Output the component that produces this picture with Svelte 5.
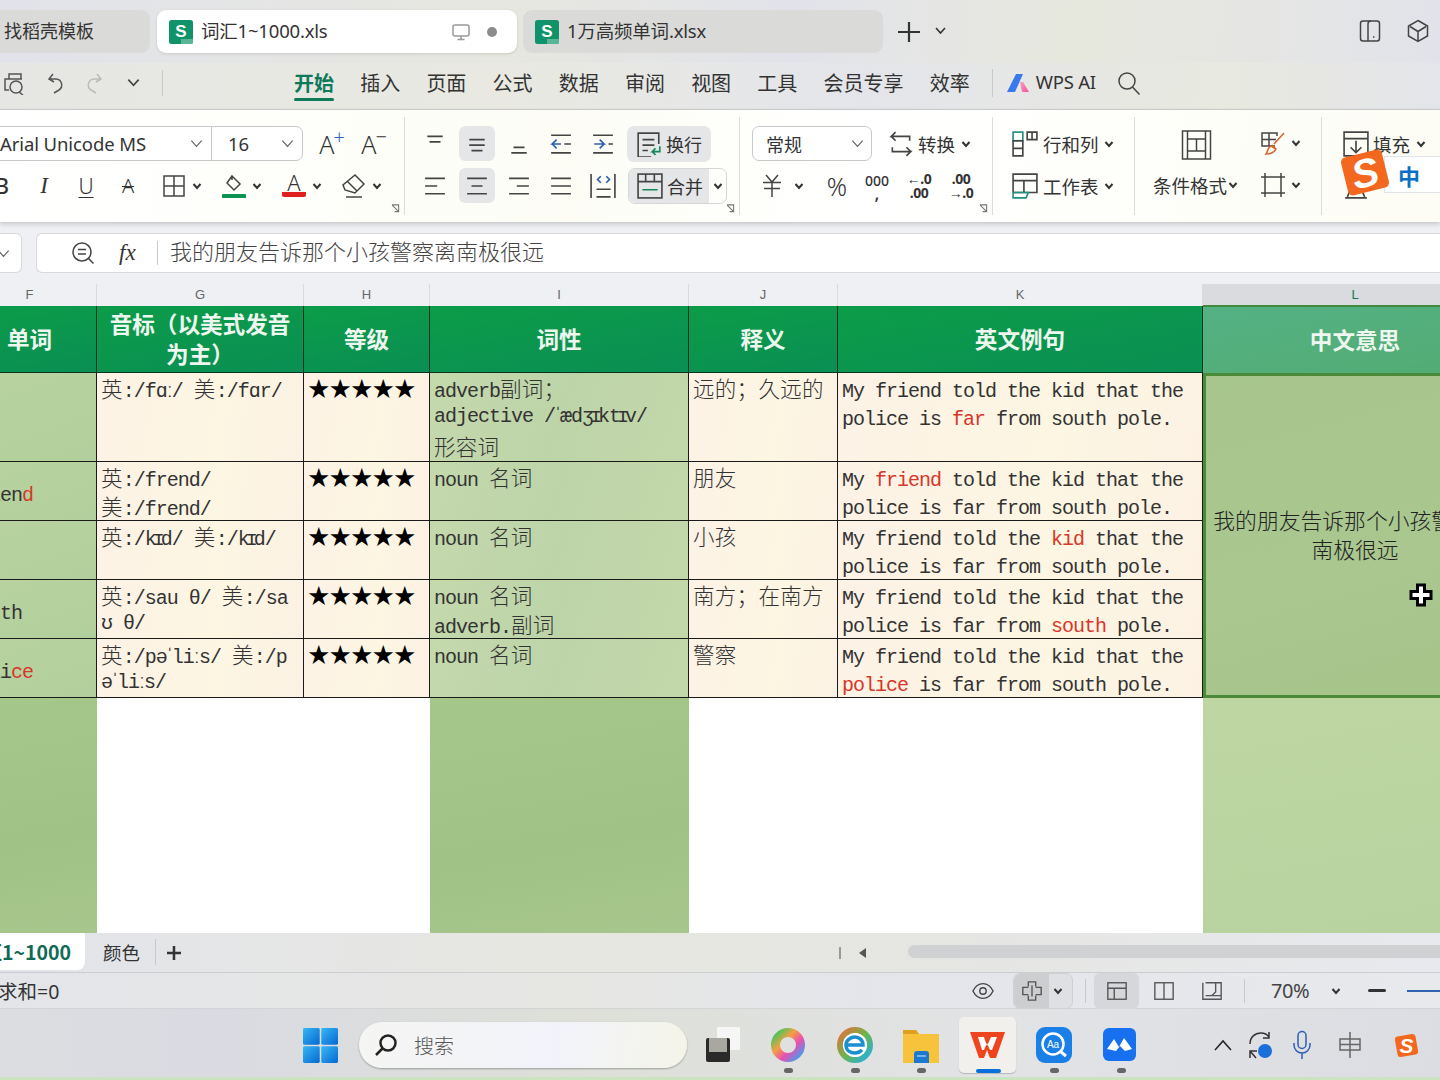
<script>
	const menus = ['开始', '插入', '页面', '公式', '数据', '审阅', '视图', '工具', '会员专享', '效率'];
	const sentence = (word) =>
		`My friend told the kid that the police is far from south pole.`.replace(word, `*${word}*`);

	const rows = [
		{
			word: ['', 'far'],
			ipa: ['英:/fɑː/ 美:/fɑr/'],
			pos: ['adverb副词；', 'adjective /ˈædʒɪktɪv/', '形容词'],
			mean: '远的；久远的',
			ex: sentence('far')
		},
		{
			word: ['frien', 'd'],
			ipa: ['英:/frend/', '美:/frend/'],
			pos: ['noun 名词'],
			mean: '朋友',
			ex: sentence('friend')
		},
		{
			word: ['', 'kid'],
			ipa: ['英:/kɪd/ 美:/kɪd/'],
			pos: ['noun 名词'],
			mean: '小孩',
			ex: sentence('kid')
		},
		{
			word: ['south', ''],
			ipa: ['英:/sau θ/ 美:/sa', 'ʊ θ/'],
			pos: ['noun 名词', 'adverb.副词'],
			mean: '南方；在南方',
			ex: sentence('south')
		},
		{
			word: ['poli', 'ce'],
			ipa: ['英:/pəˈliːs/ 美:/p', 'əˈliːs/'],
			pos: ['noun 名词'],
			mean: '警察',
			ex: sentence('police')
		}
	];

	function runs(text) {
		return text
			.split(/([\u4e00-\u9fff：；（）]+|[ɪˈː])/)
			.filter(Boolean)
			.map((t) => ({
				t,
				cjk: /[\u4e00-\u9fff：；（）]/.test(t),
				narrow: /[ɪˈː]/.test(t)
			}));
	}

	function exParts(text) {
		return text.split('*').map((t, i) => ({ t, red: i % 2 === 1 }));
	}
</script>

{#snippet caret()}
	<svg class="caret" viewBox="0 0 10 10"><path d="M1.500 3 5 7l3.500-4" /></svg>
{/snippet}

{#snippet chev()}
	<svg class="chev" viewBox="0 0 16 16"><path d="M2.500 5 8 11l5.500-6" /></svg>
{/snippet}

{#snippet launcher()}
	<svg class="launcher" viewBox="0 0 10 10"><path d="M1 1h7.500v7.500M1.500 1.500l6.500 6.500M8.500 4v4.500H4" /></svg>
{/snippet}

{#snippet sheetIcon()}
	<svg class="file" viewBox="0 0 24 24">
		<rect width="24" height="24" rx="2.500" fill="#10936a" />
		<path d="M12 19h12v3a2 2 0 0 1-2 2H12z" fill="#59b595" />
		<text x="12" y="17" text-anchor="middle" class="file-s">S</text>
	</svg>
{/snippet}

{#snippet cellLines(lines)}
	{#each lines as line}
		<div class="line">{#each runs(line) as p}<span class:cjk={p.cjk} class:narrow={p.narrow}>{p.t}</span>{/each}</div>
	{/each}
{/snippet}

<div class="screen">
	<header class="tabbar">
		<div class="tab dim first">找稻壳模板</div>
		<div class="tab active">
			{@render sheetIcon()}
			<span class="tab-name">词汇1~1000.xls</span>
			<svg class="ico monitor" viewBox="0 0 20 20"><rect x="2" y="3" width="16" height="11" rx="2" /><path d="M10 14v3M6.500 17.500h7" /></svg>
			<i class="dot"></i>
		</div>
		<div class="tab dim">
			{@render sheetIcon()}
			<span class="tab-name">1万高频单词.xlsx</span>
		</div>
		<svg class="plus" viewBox="0 0 24 24"><path d="M12 2v20M1 12h22" /></svg>
		<span class="tab-caret">{@render chev()}</span>
		<div class="spring"></div>
		<svg class="ico win-ico" viewBox="0 0 24 24"><rect x="2.500" y="2" width="19" height="20" rx="2.500" /><path d="M10 22V5c0-2 1-3 3-3M15 18h1.500" /></svg>
		<svg class="ico win-ico cube" viewBox="0 0 24 24"><path d="M12 1.500 21.500 7v10L12 22.500 2.500 17V7zM4 7.500l8 5 8-5M12 12.500V22" /></svg>
	</header>

	<nav class="menubar">
		<svg class="ico qa print" viewBox="0 0 24 24"><path d="M5 8V3h12v5M5 19H1V8h17M15 21l4 3" /><circle cx="12" cy="16" r="6" /></svg>
		<svg class="ico qa" viewBox="0 0 24 24"><path d="M9 3 5 8l5 3M5 8h7a6 6 0 0 1 3 11l-5 3" /></svg>
		<svg class="ico qa off" viewBox="0 0 24 24"><path d="M15 3l4 5-5 3M19 8h-7a6 6 0 0 0-3 11l5 3" /></svg>
		<span class="qa-caret">{@render chev()}</span>
		<i class="vsep menu-sep"></i>
		<div class="menus">
			{#each menus as m, i}
				<span class="menu" class:current={i === 0}>{m}</span>
			{/each}
		</div>
		<i class="vsep ai-sep"></i>
		<svg class="ai-logo" viewBox="0 0 24 18">
			<defs>
				<linearGradient id="aiPink" x1="0" y1="0" x2="1" y2="1"><stop offset="0" stop-color="#f8a0c0" /><stop offset="1" stop-color="#f5509c" /></linearGradient>
			</defs>
			<path d="M9 0h7L8 18H0z" fill="#3a78ee" />
			<path d="M13 8h3l6 10h-7z" fill="url(#aiPink)" />
		</svg>
		<span class="ai-name">WPS AI</span>
		<svg class="ico find" viewBox="0 0 24 24"><circle cx="10" cy="10" r="8" /><path d="m15.500 16 7 7.500" /></svg>
	</nav>

	<section class="ribbon">
		<div class="group g1">
			<div class="row">
				<div class="select font-select">
					<span class="font-name">Arial Unicode MS</span>{@render chev()}
					<span class="font-size">16</span>{@render chev()}
				</div>
				<span class="btn a-size a-up">A<sup class="blue">+</sup></span>
				<span class="btn a-size">A<sup>−</sup></span>
			</div>
			<div class="row">
				<span class="btn glyph bold">B</span>
				<span class="btn glyph ital">I</span>
				<span class="btn glyph under">U</span>
				<span class="btn glyph strike">A</span>
				<span class="drop borders">
					<svg class="ico" viewBox="0 0 24 24"><rect x="2" y="2" width="20" height="20" /><path d="M12 2v20M2 12h20" /></svg>
					{@render caret()}
				</span>
				<span class="drop">
					<svg class="ico" viewBox="0 0 24 24"><path d="m10 2 8 8-6 6-7-7zM10 2v4" /><rect x="0" y="20" width="24" height="5" rx="1" fill="#0f9350" stroke="none" /></svg>
					{@render caret()}
				</span>
				<span class="drop">
					<span class="color-a">A</span>
					{@render caret()}
				</span>
				<span class="drop">
					<svg class="ico" viewBox="0 0 24 24"><path d="M13 1l9 9-9 9-10-3-2-5zM5 7l10 10M4 23h16" /></svg>
					{@render caret()}
				</span>
			</div>
			{@render launcher()}
		</div>

		<div class="group g2">
			<div class="row">
				<span class="btn"><svg class="ico s" viewBox="0 0 20 20"><path d="M3 3h14M5 8h10" /></svg></span>
				<span class="btn on"><svg class="ico s" viewBox="0 0 20 20"><path d="M3 6h14M3 11h14M5 16h10" /></svg></span>
				<span class="btn"><svg class="ico s" viewBox="0 0 20 20"><path d="M5 13h10M3 18h14" /></svg></span>
				<span class="btn"><svg class="ico s" viewBox="0 0 20 20"><path d="M1 2h18M1 18h18M13 10h6" /><path class="bl" d="M10 10H2l4-4M2 10l4 4" /></svg></span>
				<span class="btn"><svg class="ico s" viewBox="0 0 20 20"><path d="M1 2h18M1 18h18M15 10h4" /><path class="bl" d="M2 10h9l-4-4M11 10l-4 4" /></svg></span>
				<span class="pill wrap">
					<svg class="ico m" viewBox="0 0 24 24"><path d="M21 12V2H2v22h12M6 8h11M6 13h11M6 18h5" /><path class="gr" d="M22 14v5h-7l3-3M15 19l3 3" /></svg>
					换行
				</span>
			</div>
			<div class="row">
				<span class="btn"><svg class="ico s" viewBox="0 0 20 20"><path d="M1 3h18M1 10h11M1 17h18" /></svg></span>
				<span class="btn on"><svg class="ico s" viewBox="0 0 20 20"><path d="M1 3h18M5 10h10M1 17h18" /></svg></span>
				<span class="btn"><svg class="ico s" viewBox="0 0 20 20"><path d="M1 3h18M8 10h11M1 17h18" /></svg></span>
				<span class="btn"><svg class="ico s" viewBox="0 0 20 20"><path d="M1 3h18M1 10h18M1 17h18" /></svg></span>
				<span class="btn"><svg class="ico m" viewBox="0 0 24 24"><path d="M1 1v22M23 1v22M6 22h13M6 15h13" /><path class="bl" d="M10 3 7 6l3 3M15 3l3 3-3 3" /></svg></span>
				<span class="split merge">
					<span class="split-main">
						<svg class="ico m" viewBox="0 0 24 24"><rect x="1" y="1" width="22" height="22" /><path d="M1 8h22M8 1v7M16 1v7" /><path class="gr" d="M5 15.500h14" /></svg>
						合并
					</span>
					<span class="split-side">{@render caret()}</span>
				</span>
			</div>
			{@render launcher()}
		</div>

		<div class="group g3">
			<div class="row">
				<div class="select num-select"><span>常规</span>{@render chev()}</div>
				<svg class="ico m conv" viewBox="0 0 24 24"><path d="M7 1 3 5h17v4M17 23l4-4H4v-4M7 1 3 5l4 4M17 15l4 4-4 4" /></svg>
				<span class="lbl">转换</span>
				{@render caret()}
			</div>
			<div class="row">
				<svg class="ico money" viewBox="0 0 20 24" aria-label="¥"><path d="M4 1l6 7 6-7M1 8.500h18M2 14.500h16M10 8.500V23" /></svg>{@render caret()}
				<span class="pct">%</span>
				<span class="n3"><b>000</b><b class="comma">,</b></span>
				<span class="n3 dec"><b>←.0</b><b>.00</b></span>
				<span class="n3 dec"><b>.00</b><b>→.0</b></span>
			</div>
			{@render launcher()}
		</div>

		<div class="group g4">
			<div class="row">
				<svg class="ico m" viewBox="0 0 24 24"><rect x="1" y="1" width="9" height="8" class="te" /><path d="M1 9h9v14H1zM1 16h9M14 1h9v7h-9zM18.500 1v7" /></svg>
				<span class="lbl">行和列</span>{@render caret()}
			</div>
			<div class="row">
				<svg class="ico m" viewBox="0 0 24 24"><path d="M1 18V1h22v17H1M1 7h22M11 7v11" /><path class="te" d="M1 18v5h12l2-5z" /></svg>
				<span class="lbl">工作表</span>{@render caret()}
			</div>
		</div>

		<div class="group g5">
			<div class="cond">
				<svg class="ico big" viewBox="0 0 30 30"><path d="M6 1H1v28h5M24 1h5v28h-5M6 1h18v28H6zM6 9h18M6 21h18M15 9v12" /></svg>
				<span class="lbl cond-lbl">条件格式{@render caret()}</span>
			</div>
			<div class="cond-side">
				<span class="drop">
					<svg class="ico" viewBox="0 0 24 24"><path d="M14 15H1V2h15v3M1 8.500h14M8 2v13" /><path class="or" d="M23 2 13 13M10 15c-3 1-3 5-5 8 4 0 8-1 10-5zM11 14l4 4" /></svg>
					{@render caret()}
				</span>
				<span class="drop">
					<svg class="ico" viewBox="0 0 24 24"><path d="M0 4h24M0 20h24M4 0v24M20 0v24" /></svg>
					{@render caret()}
				</span>
			</div>
		</div>

		<div class="group g6">
			<div class="row">
				<svg class="ico m" viewBox="0 0 24 24"><path d="M1 1h22v22H1zM1 7h22M12 9v11M7 15l5 5 5-5" /></svg>
				<span class="lbl">填充</span>{@render caret()}
			</div>
			<div class="row">
				<svg class="ico m" viewBox="0 0 24 24"><path d="M4 22 12 4l8 18M2 23h20" /></svg>
			</div>
		</div>

		<div class="sogou">
			<div class="sogou-bar"><span>中</span></div>
			<div class="sogou-s"><span>S</span></div>
		</div>
	</section>

	<div class="formula">
		<div class="name-box">{@render chev()}</div>
		<div class="formula-box">
			<svg class="ico fz" viewBox="0 0 24 24"><circle cx="11" cy="11" r="9" /><path d="m17.500 17.500 5 5M7 8.500h8M7 13h8" /></svg>
			<span class="fx">fx</span>
			<i class="vsep fx-sep"></i>
			<span class="formula-text">我的朋友告诉那个小孩警察离南极很远</span>
		</div>
	</div>

	<div class="col-heads">
		<span class="ch">F</span>
		<span class="ch">G</span>
		<span class="ch">H</span>
		<span class="ch">I</span>
		<span class="ch">J</span>
		<span class="ch">K</span>
		<span class="ch sel">L</span>
	</div>

	<main class="sheet">
		<div class="hd">单词</div>
		<div class="hd">音标（以美式发音<br />为主）</div>
		<div class="hd">等级</div>
		<div class="hd">词性</div>
		<div class="hd">释义</div>
		<div class="hd">英文例句</div>
		<div class="hd hd-l">中文意思</div>

		{#each rows as r, i}
			<div class="c green word">{r.word[0]}<span class="red">{r.word[1]}</span></div>
			<div class="c cream">{@render cellLines(r.ipa)}</div>
			<div class="c cream stars">★★★★★</div>
			<div class="c green2">{@render cellLines(r.pos)}</div>
			<div class="c cream cjk mean">{r.mean}</div>
			<div class="c cream ex">
				{#each exParts(r.ex) as p}<span class:red={p.red}>{p.t}</span>{/each}
			</div>
			{#if i === 0}
				<div class="merged"><span>我的朋友告诉那个小孩警察离南极很远</span></div>
			{/if}
		{/each}

		<div class="blank b-f"></div>
		<div class="blank"></div>
		<div class="blank"></div>
		<div class="blank b-i"></div>
		<div class="blank"></div>
		<div class="blank"></div>
		<div class="blank b-l"></div>
	</main>

	<div class="sheet-tabs">
		<div class="sheet-tab">词汇1~1000</div>
		<span class="sheet-other">颜色</span>
		<i class="vsep tabs-sep"></i>
		<svg class="add" viewBox="0 0 14 14"><path d="M7 0v14M0 7h14" /></svg>
		<div class="spring"></div>
		<i class="tick"></i>
		<i class="left-tri"></i>
		<div class="hscroll"></div>
	</div>

	<div class="status">
		<span class="sum">求和=0</span>
		<div class="spring"></div>
		<svg class="ico eye" viewBox="0 0 24 24"><path d="M1 12C4 6 8 4 12 4s8 2 11 8c-3 6-7 8-11 8s-8-2-11-8z" /><circle cx="12" cy="12" r="3.500" /></svg>
		<span class="split view-split">
			<span class="view-main"><svg class="ico s2" viewBox="0 0 24 24"><path d="M8 7V2h8v5M8 17v5h8v-5M8 8H2v8h6M16 8h6v8h-6M12 6v12" /></svg></span>
			<span class="view-side">{@render caret()}</span>
		</span>
		<i class="vsep st-sep"></i>
		<span class="view on"><svg class="ico s2" viewBox="0 0 24 24"><rect x="2" y="3" width="20" height="18" /><path d="M2 9h20M9 9v12" /></svg></span>
		<span class="view"><svg class="ico s2" viewBox="0 0 24 24"><rect x="2" y="3" width="20" height="18" /><path d="M12 3v18" /></svg></span>
		<span class="view"><svg class="ico s2" viewBox="0 0 24 24"><path d="M5 3h17v14H5M2 3v18h20v-4M16 3v10l-4 4" /></svg></span>
		<i class="vsep st-sep2"></i>
		<span class="zoom-val">70%</span>
		<span class="zoom-caret">{@render caret()}</span>
		<i class="minus"></i>
		<i class="slider"></i>
	</div>

	<footer class="taskbar">
		<svg class="start" viewBox="0 0 36 36">
			<defs>
				<linearGradient id="winB" x1="0" y1="0" x2="1" y2="1"><stop offset="0" stop-color="#39b6f5" /><stop offset="1" stop-color="#0369d1" /></linearGradient>
			</defs>
			<rect x="0" y="0" width="17.200" height="17.200" rx="1.500" fill="url(#winB)" />
			<rect x="18.800" y="0" width="17.200" height="17.200" rx="1.500" fill="url(#winB)" />
			<rect x="0" y="18.800" width="17.200" height="17.200" rx="1.500" fill="url(#winB)" />
			<rect x="18.800" y="18.800" width="17.200" height="17.200" rx="1.500" fill="url(#winB)" />
		</svg>
		<div class="search">
			<svg class="ico sr" viewBox="0 0 24 24"><circle cx="14" cy="10" r="7.500" /><path d="M8.500 15.500 2 22" /></svg>
			<span>搜索</span>
		</div>
		<div class="apps">
			<span class="app">
				<svg viewBox="0 0 36 36" class="ai"><rect x="13" y="0" width="23" height="23" fill="#f6f6f6" /><rect x="2" y="11" width="24" height="24" rx="2" fill="#2a2a2a" /><rect x="5" y="11" width="18" height="14" fill="#a8a8a0" /></svg>
			</span>
			<span class="app dotted">
				<svg viewBox="0 0 36 36" class="ai"><defs><linearGradient id="ring" x1="0" y1="0" x2="1" y2="1"><stop offset="0" stop-color="#38c860" /><stop offset=".35" stop-color="#f5a040" /><stop offset=".65" stop-color="#e850b0" /><stop offset="1" stop-color="#40a0f0" /></linearGradient></defs><circle cx="18" cy="18" r="12.500" fill="none" stroke="url(#ring)" stroke-width="9" /></svg>
			</span>
			<span class="app dotted">
				<svg viewBox="0 0 36 36" class="ai"><defs><linearGradient id="edge" x1="0" y1="0" x2="1" y2="1"><stop offset="0" stop-color="#e8703a" /><stop offset=".5" stop-color="#6cb54a" /><stop offset="1" stop-color="#20b0e8" /></linearGradient></defs><circle cx="18" cy="18" r="15" fill="none" stroke="url(#edge)" stroke-width="6" /><circle cx="18" cy="18" r="12" fill="#fff" /><path d="M9 18h17c0-5-4-8-8-8s-9 3-9 8 4 8 9 8c3 0 5-1 7-3" fill="none" stroke="#1c8fd0" stroke-width="3.500" /></svg>
			</span>
			<span class="app dotted">
				<svg viewBox="0 0 36 36" class="ai"><path d="M0 3h13l3 4h20v29H0z" fill="#f8c33c" /><path d="M0 3h13l3 4H0z" fill="#dfa020" /><path d="M11 36V27a3 3 0 0 1 3-3h9a3 3 0 0 1 3 3v9z" fill="#1f78d0" /><path d="M14 29h9" stroke="#8fc8f5" stroke-width="1.500" /></svg>
			</span>
			<span class="app wps">
				<svg viewBox="0 0 36 36" class="ai"><path d="M0 5h35l-9 26h-6l-3-8-3 8H9z" fill="#f0441f" /><path d="M8 10h6l3 9 4-9h6l-5 13h-2l-3-7-3 7h-2z" fill="#fff" /></svg>
			</span>
			<span class="app dotted">
				<svg viewBox="0 0 36 36" class="ai"><rect width="36" height="36" rx="9" fill="#1a80e8" /><circle cx="17" cy="17" r="10.500" fill="none" stroke="#fff" stroke-width="2.500" /><path d="m25 25 5 4" stroke="#fff" stroke-width="3" /><text x="17" y="21" text-anchor="middle" class="aa">Aa</text></svg>
			</span>
			<span class="app dotted">
				<svg viewBox="0 0 36 36" class="ai"><rect y="1" width="33" height="33" rx="6" fill="#1670f0" /><path d="M4 22 11 12l5 8 5-9 8 11-7 2-5-5-4 5z" fill="#fff" /></svg>
			</span>
		</div>
		<div class="tray">
			<svg class="ico t-up" viewBox="0 0 20 14"><path d="M2 12 10 3l8 9" /></svg>
			<svg class="ico t-sync" viewBox="0 0 26 30"><path d="M3 14C3 7 8 3 14 3c3 0 6 1 8 4M22 2v6h-6M3 28v-7h7M3 21l6 7" /><circle cx="18" cy="21" r="7" fill="#1a70d8" stroke="none" /></svg>
			<svg class="ico t-mic" viewBox="0 0 20 30"><rect x="6" y="1.500" width="8" height="17" rx="4" /><path d="M2 13v2a8 8 0 0 0 16 0v-2M10 23v6" /></svg>
			<svg class="ico t-ime" viewBox="0 0 24 30"><rect x="2" y="9" width="20" height="11" /><path d="M12 2v26M2 14.500h20" /></svg>
			<svg class="t-s" viewBox="0 0 24 24"><rect x="2" y="2" width="20" height="20" rx="3" fill="#f4671f" transform="rotate(-10 12 12)" /><text x="12" y="19" text-anchor="middle" class="s-txt">S</text></svg>
		</div>
	</footer>

	<svg class="cursor" viewBox="0 0 24 24"><path d="M8.500 2h7v6.500H22v7h-6.500V22h-7v-6.500H2v-7h6.500z" fill="#fff" stroke="#000" stroke-width="3" /></svg>
</div>

<style>
	:global(body) {
		margin: 0;
		overflow: hidden;
		background: #e4e5e8;
	}

	.screen {
		position: relative;
		display: flex;
		flex-direction: column;
		width: 1440px;
		height: 1080px;
		overflow: hidden;
		font-family: 'Noto Sans CJK SC', 'Noto Sans', sans-serif;
		color: #333;
	}

	svg {
		flex: none;
		display: block;
	}

	.spring {
		flex: 1;
	}

	.ico {
		width: 24px;
		height: 24px;
		fill: none;
		stroke: #444;
		stroke-width: 1.500;
	}

	.ico.s {
		width: 22px;
		height: 22px;
	}

	.ico.m {
		width: 26px;
		height: 26px;
	}

	.bl {
		stroke: #2c5fb0;
	}

	.gr {
		stroke: #17875a;
	}

	.te {
		stroke: #1f8f80;
	}

	.or {
		stroke: #d9622a;
	}

	.caret {
		width: 10px;
		height: 10px;
		fill: none;
		stroke: #333;
		stroke-width: 2;
	}

	.chev {
		width: 15px;
		height: 15px;
		fill: none;
		stroke: #666;
		stroke-width: 1.300;
	}

	.vsep {
		display: block;
		width: 1px;
		background: #c8c9cc;
		flex: none;
	}

	/* title tabs */
	.tabbar {
		flex: none;
		height: 63px;
		box-sizing: border-box;
		padding-top: 10px;
		display: flex;
		align-items: flex-start;
		background: linear-gradient(95deg, #e2e3ea 0%, #e6e7df 35%, #e2e3ea 55%, #e7e8dd 75%, #e2e3ea 100%);
	}

	.tab {
		box-sizing: border-box;
		width: 360px;
		height: 43px;
		margin-right: 6px;
		padding: 0 0 3px 12px;
		display: flex;
		align-items: center;
		border-radius: 9px;
		font-size: 18px;
		color: #333;
	}

	.tab.dim {
		background: #dadbd9;
	}

	.tab.first {
		width: 160px;
		margin-left: -10px;
		padding-left: 14px;
		margin-right: 7px;
	}

	.tab.active {
		background: #fff;
		box-shadow: 0 1px 3px rgba(0, 0, 0, 0.12);
	}

	.file {
		width: 24px;
		height: 24px;
		margin: 3px 8px 0 0;
	}

	.file-s {
		font: 700 17px 'Liberation Sans', sans-serif;
		fill: #fff;
	}

	.tab-name {
		flex: 1;
		font-family: 'Noto Sans', 'Noto Sans CJK SC', sans-serif;
		font-size: 18.500px;
		letter-spacing: -0.200px;
	}

	.monitor {
		width: 20px;
		height: 20px;
		stroke: #999;
		margin: 3px 16px 0 0;
	}

	.dot {
		width: 10px;
		height: 10px;
		margin: 3px 20px 0 0;
		border-radius: 50%;
		background: #8c8c8c;
	}

	.plus {
		width: 24px;
		height: 24px;
		margin: 10px 0 0 8px;
		stroke: #333;
		stroke-width: 2.200;
		fill: none;
	}

	.tab-caret {
		margin: 14px 0 0 13px;
	}

	.tab-caret .chev {
		stroke: #333;
		stroke-width: 2;
		width: 13px;
		height: 13px;
	}

	.win-ico {
		margin: 9px 0 0 0;
		stroke: #444;
	}

	.cube {
		margin: 9px 10px 0 24px;
	}

	/* menu row */
	.menubar {
		flex: none;
		height: 47px;
		padding-bottom: 7px;
		display: flex;
		align-items: center;
		background: linear-gradient(95deg, #e6e7e4 0%, #e9e9e2 35%, #e4e5ea 60%, #e8e9df 85%, #e4e5ea 100%);
		border-bottom: 1px solid #cdced0;
		box-sizing: border-box;
	}

	.qa {
		margin-left: 16px;
		stroke: #555;
	}

	.qa.print {
		margin-left: 4px;
	}

	.qa.off {
		margin-left: 14px;
		stroke: #bbb;
	}

	.qa-caret {
		margin-left: 20px;
	}

	.qa-caret .chev {
		stroke: #444;
		stroke-width: 1.800;
	}

	.menu-sep {
		height: 26px;
		margin-left: 21px;
	}

	.menus {
		display: flex;
		gap: 26.200px;
		margin-left: 131px;
	}

	.menu {
		position: relative;
		font-size: 20px;
		line-height: 30px;
		color: #333;
	}

	.menu.current {
		font-weight: 700;
		color: #0e7a5a;
	}

	.menu.current::after {
		content: '';
		position: absolute;
		left: 0;
		right: 0;
		bottom: -3px;
		height: 3px;
		border-radius: 2px;
		background: #0e7a5a;
	}

	.ai-sep {
		height: 28px;
		margin-left: 22px;
	}

	.ai-logo {
		width: 24px;
		height: 18px;
		margin-left: 14px;
	}

	.ai-name {
		margin-left: 5px;
		font: 18.500px/1 'Noto Sans', sans-serif;
		color: #333;
		letter-spacing: -0.200px;
	}

	.find {
		margin-left: 21px;
	}

	/* ribbon */
	.ribbon {
		position: relative;
		flex: none;
		height: 112px;
		display: flex;
		background: linear-gradient(95deg, #fff 0%, #fdfdf6 40%, #fff 60%, #fdfdf5 100%);
		box-shadow: 0 2px 5px rgba(0, 0, 0, 0.18);
		z-index: 1;
	}

	.group {
		position: relative;
		box-sizing: border-box;
		margin: 7px 0;
		height: 98px;
		border-right: 1px solid #dcdcdc;
		padding-top: 9px;
		flex: none;
	}

	.row {
		display: flex;
		align-items: center;
		height: 35px;
		margin-bottom: 7px;
	}

	.g1 {
		width: 405px;
	}

	.g2 {
		width: 335px;
		padding-left: 9px;
	}

	.g3 {
		width: 253px;
		padding-left: 12px;
	}

	.g4 {
		width: 142px;
		padding-left: 19px;
	}

	.g5 {
		width: 187px;
		display: flex;
	}

	.g6 {
		flex: 1;
		padding-left: 21px;
		border-right: 0;
	}

	.launcher {
		position: absolute;
		right: 4px;
		bottom: 2px;
		width: 9px;
		height: 9px;
		fill: none;
		stroke: #777;
		stroke-width: 1.200;
	}

	.select {
		box-sizing: border-box;
		height: 35px;
		display: flex;
		align-items: center;
		border: 1px solid #c8c8ca;
		border-radius: 7px;
		background: #fff;
	}

	.font-select {
		width: 319px;
		margin-left: -16px;
		padding-left: 15px;
		font: 18.500px 'Noto Sans', sans-serif;
		flex: none;
	}

	.font-name {
		width: 189px;
		flex: none;
		letter-spacing: -0.100px;
	}

	.font-size {
		margin-left: 7px;
		padding-left: 16px;
		width: 52px;
		flex: none;
		line-height: 33px;
		border-left: 1px solid #c8c8ca;
	}

	.btn {
		box-sizing: border-box;
		width: 42px;
		height: 35px;
		display: flex;
		align-items: center;
		justify-content: center;
		flex: none;
		color: #333;
	}

	.btn.on {
		background: #e5e6e8;
		border-radius: 6px;
		width: 36px;
		margin: 0 3px;
	}

	.a-size {
		font: 300 25px 'Noto Sans', sans-serif;
	}

	.a-up {
		margin-left: 8px;
	}

	.a-size sup {
		font-size: 20px;
		line-height: 0;
		margin: -14px 0 0 -1px;
	}

	.blue {
		color: #2c62c0;
	}

	.glyph {
		font: 300 21px 'Noto Sans', sans-serif;
	}

	.bold {
		margin-left: -19px;
		font-weight: 500;
	}

	.ital {
		font-style: italic;
		font-family: 'Liberation Serif', serif;
		font-size: 23px;
	}

	.under {
		text-decoration: underline;
		text-decoration-thickness: 1px;
		text-underline-offset: 3px;
	}

	.strike {
		text-decoration: line-through;
		text-decoration-thickness: 1px;
		font-size: 20px;
	}

	.drop {
		width: 60px;
		display: flex;
		align-items: center;
		gap: 6px;
		flex: none;
	}

	.borders {
		margin-left: 13px;
	}

	.color-a {
		width: 24px;
		font: 300 22px/20px 'Noto Sans', sans-serif;
		text-align: center;
		border-bottom: 5px solid #e02020;
		border-radius: 2px;
		height: 20px;
		margin-top: -2px;
	}

	.pill {
		margin-left: 3px;
		width: 84px;
		height: 36px;
		flex: none;
		display: flex;
		align-items: center;
		gap: 4px;
		padding-left: 9px;
		box-sizing: border-box;
		background: #e5e6e8;
		border-radius: 7px;
		font-size: 18px;
	}

	.split {
		display: flex;
		height: 36px;
		box-sizing: border-box;
		border: 1px solid #d6d6d8;
		border-radius: 7px;
		overflow: hidden;
		flex: none;
	}

	.merge {
		margin-left: 4px;
		width: 99px;
		font-size: 18px;
	}

	.split-main {
		width: 80px;
		flex: none;
		display: flex;
		align-items: center;
		gap: 4px;
		padding-left: 8px;
		box-sizing: border-box;
		background: #e5e6e8;
	}

	.split-side {
		flex: 1;
		display: flex;
		align-items: center;
		justify-content: center;
	}

	.num-select {
		width: 120px;
		padding-left: 13px;
		justify-content: space-between;
		padding-right: 6px;
		font-size: 18px;
	}

	.conv {
		margin-left: 16px;
	}

	.lbl {
		font-size: 18.500px;
		margin: 0 6px 0 4px;
		white-space: nowrap;
	}

	.g4 .lbl {
		margin: 0 5px 0 5px;
	}

	.money {
		width: 20px;
		height: 24px;
		margin: 0 12px 0 10px;
	}

	.pct {
		font: 300 25px 'Noto Sans', sans-serif;
		margin-left: 21px;
		width: 24px;
		text-align: center;
	}

	.n3 {
		width: 28px;
		margin-left: 14px;
		display: flex;
		flex-direction: column;
		align-items: center;
		font: 400 14px/14px 'Noto Sans', sans-serif;
	}

	.n3 b {
		font-weight: 500;
	}

	.comma {
		font-size: 18px;
		line-height: 10px;
		font-weight: 700;
	}

	.dec b {
		font-weight: 700;
		letter-spacing: -0.500px;
	}

	.cond {
		width: 116px;
		margin-left: 9px;
		display: flex;
		flex-direction: column;
		align-items: center;
	}

	.big {
		width: 31px;
		height: 30px;
		margin: 4px 0 12px 2px;
	}

	.cond-lbl {
		display: flex;
		align-items: center;
		gap: 1px;
		margin: 0;
		white-space: nowrap;
	}

	.cond-side {
		margin-left: 14px;
		display: flex;
		flex-direction: column;
		gap: 18px;
		padding-top: 5px;
	}

	.sogou {
		position: absolute;
		left: 1342px;
		top: 40px;
		width: 98px;
		height: 50px;
	}

	.sogou-bar {
		position: absolute;
		left: 42px;
		top: 6px;
		width: 60px;
		height: 37px;
		background: #fff;
		border: 1px solid #dfe3ea;
		box-sizing: border-box;
		font-size: 22px;
		font-weight: 700;
		color: #0a6fc8;
		padding-left: 13px;
		line-height: 36px;
	}

	.sogou-s {
		position: absolute;
		left: 2px;
		top: 3px;
		width: 42px;
		height: 39px;
		background: #f4671f;
		border-radius: 5px;
		transform: rotate(-14deg);
		display: flex;
		align-items: center;
		justify-content: center;
		color: #fff;
		font: italic 700 40px/1 'Liberation Sans', sans-serif;
	}

	/* formula bar */
	.formula {
		flex: none;
		height: 62px;
		box-sizing: border-box;
		padding-top: 11px;
		display: flex;
		background: #eff0f3;
	}

	.name-box {
		width: 22px;
		height: 40px;
		box-sizing: border-box;
		background: #fff;
		border: 1px solid #d9d9db;
		border-left: 0;
		border-radius: 0 6px 6px 0;
		display: flex;
		align-items: center;
		margin-right: 14px;
	}

	.name-box .chev {
		margin-left: -4px;
	}

	.formula-box {
		flex: 1;
		height: 40px;
		box-sizing: border-box;
		background: #fff;
		border: 1px solid #d9d9db;
		border-right: 0;
		border-radius: 6px 0 0 6px;
		display: flex;
		align-items: center;
	}

	.fz {
		margin-left: 34px;
	}

	.fx {
		margin-left: 24px;
		width: 24px;
		font: italic 23px 'Liberation Serif', serif;
		color: #333;
	}

	.fx-sep {
		height: 24px;
		margin-left: 14px;
	}

	.formula-text {
		margin: 0 0 7px 12px;
		font-size: 22px;
		line-height: 1;
		font-weight: 300;
		color: #444;
	}

	/* column letters, widths shared with the sheet below */
	.col-heads,
	.sheet {
		display: grid;
		grid-template-columns: 134px 207px 126px 259px 149px 365px 304px;
		margin-left: -37px;
		width: 1544px;
		flex: none;
	}

	.col-heads {
		height: 22px;
		background: #eff0f3;
	}

	.ch {
		box-sizing: border-box;
		border-right: 1px solid #dadadc;
		text-align: center;
		font: 13px/22px 'Liberation Sans', sans-serif;
		color: #666;
	}

	.ch.sel {
		background: #d9dbdf;
		color: #1d7a50;
		border-right: 0;
	}

	/* sheet */
	.sheet {
		grid-template-rows: 67px 89px 59px 59px 59px 59px 235px;
		height: 627px;
		font-family: 'Liberation Mono', 'DejaVu Sans Mono', monospace;
		font-size: 20px;
		color: #333;
		background: #fff;
	}

	.hd {
		box-sizing: border-box;
		display: flex;
		align-items: center;
		justify-content: center;
		text-align: center;
		background: linear-gradient(170deg, #0c9c48, #0a8f54);
		border-right: 1px solid #0d3320;
		border-bottom: 1px solid #0d3320;
		color: #eef7ef;
		font: 700 22.600px/30px 'Noto Sans CJK SC', sans-serif;
	}

	.hd-l {
		background: linear-gradient(170deg, #54b184, #52ac72);
		border-top: 2px solid #3f8a3c;
		border-bottom: 0;
		border-right: 0;
		margin-top: -1px;
	}

	.c {
		box-sizing: border-box;
		padding: 0 0 0 4px;
		border-right: 1px solid #1a1a1a;
		border-bottom: 1px solid #1a1a1a;
		line-height: 29px;
		letter-spacing: -1px;
		overflow: hidden;
		white-space: nowrap;
	}

	.line {
		height: 29px;
		overflow: hidden;
	}

	.cjk {
		font-family: 'Noto Sans CJK SC', sans-serif;
		font-size: 21.500px;
		letter-spacing: 0.300px;
		font-weight: 300;
	}

	/* these ipa glyphs sit in a cell about half as wide as the rest */
	.narrow {
		margin-left: -3px;
		letter-spacing: -4px;
	}

	.mean {
		padding-top: 0;
	}

	.green {
		background: linear-gradient(160deg, #b9d39f, #b1cf9c);
	}

	.green2 {
		background: linear-gradient(110deg, #c4d9ac, #bdd4a9 50%, #c3d8aa);
	}

	.cream {
		background: linear-gradient(100deg, #fdf2e6, #fdf6e2 60%, #fcf1e4);
	}

	.word {
		display: flex;
		align-items: center;
		padding-top: 9px;
	}

	.red {
		color: #d8362a;
	}

	.stars {
		padding-top: 0;
		font: 21.500px/28px 'Noto Sans CJK SC', sans-serif;
		color: #000;
		white-space: nowrap;
		letter-spacing: 0;
	}

	.ex {
		padding-top: 5px;
		line-height: 28px;
		white-space: normal;
	}

	.merged {
		grid-column: 7;
		grid-row: 2 / span 5;
		box-sizing: border-box;
		border: solid #4b8a38;
		border-width: 3px 0 3px 3px;
		background: linear-gradient(165deg, #a7c68d, #a9c78f 60%, #a5c48a);
		display: flex;
		align-items: center;
		justify-content: center;
		text-align: center;
		padding: 0 9px 4px 6px;
		font: 300 21.800px/29px 'Noto Sans CJK SC', sans-serif;
		color: #222;
	}

	.blank {
		background: #fff;
	}

	.b-f,
	.b-i {
		background: linear-gradient(170deg, #a5c78a, #a0c286 60%, #a6c68d);
	}

	.b-l {
		background: linear-gradient(170deg, #bdd6a2, #b9d3a0);
	}

	/* sheet tabs */
	.sheet-tabs {
		flex: none;
		height: 40px;
		box-sizing: border-box;
		border-bottom: 1px solid #cccdd0;
		display: flex;
		align-items: flex-start;
		background: linear-gradient(95deg, #e3e4ea 0%, #e6e7e0 40%, #e5e6e3 70%, #e8e9ee 100%);
	}

	.sheet-tab {
		box-sizing: border-box;
		width: 124px;
		height: 37px;
		margin-left: -39px;
		padding-left: 2px;
		background: #fff;
		border-radius: 0 0 8px 0;
		font-weight: 700;
		font-size: 19.500px;
		line-height: 38px;
		color: #0f6b56;
		white-space: nowrap;
	}

	.sheet-other {
		margin-left: 18px;
		font-size: 18.500px;
		line-height: 38px;
	}

	.tabs-sep {
		height: 26px;
		margin: 6px 0 0 15px;
	}

	.add {
		width: 14px;
		height: 14px;
		margin: 13px 0 0 11px;
		fill: none;
		stroke: #333;
		stroke-width: 2.500;
	}

	.tick {
		width: 2px;
		height: 12px;
		margin-top: 14px;
		background: #999;
	}

	.left-tri {
		width: 0;
		height: 0;
		margin: 15px 0 0 18px;
		border: 5px solid transparent;
		border-left-width: 0;
		border-right: 7px solid #555;
	}

	.hscroll {
		width: 532px;
		height: 13px;
		margin: 12px 0 0 42px;
		background: #d0d1d3;
		border-radius: 7px 0 0 7px;
	}

	/* status bar */
	.status {
		flex: none;
		height: 36px;
		display: flex;
		align-items: center;
		background: linear-gradient(95deg, #e4e5e9 0%, #e6e7e3 40%, #e4e5eb 60%, #e8e9ec 100%);
		border-bottom: 1px solid #d3d4d6;
		box-sizing: border-box;
	}

	.sum {
		margin-left: -2px;
		font: 19.500px 'Noto Sans', 'Noto Sans CJK SC', sans-serif;
		white-space: nowrap;
	}

	.eye {
		width: 22px;
		height: 22px;
		margin-right: 19px;
	}

	.view-split {
		width: 60px;
		height: 36px;
		background: #dfe0e3;
		border-color: #cfd0d2;
	}

	.view-main {
		width: 35px;
		flex: none;
		background: #cdced0;
		display: flex;
		align-items: center;
		justify-content: center;
	}

	.view-side {
		flex: 1;
		display: flex;
		align-items: center;
		justify-content: center;
		padding-right: 6px;
	}

	.st-sep {
		height: 24px;
		margin: 0 8px 0 12px;
	}

	.st-sep2 {
		height: 24px;
		margin: 0 26px 0 8px;
	}

	.view {
		width: 48px;
		height: 36px;
		display: flex;
		align-items: center;
		justify-content: center;
		flex: none;
	}

	.view.on {
		width: 45px;
		margin-right: 1px;
		background: #d6d7da;
		border-radius: 6px;
	}

	.ico.s2 {
		width: 22px;
		height: 22px;
		stroke: #555;
	}

	.zoom-val {
		font: 20px 'Noto Sans', sans-serif;
		letter-spacing: -0.500px;
		color: #444;
	}

	.zoom-caret {
		margin-left: 22px;
	}

	.minus {
		width: 18px;
		height: 3px;
		margin-left: 27px;
		border-radius: 2px;
		background: #333;
	}

	.slider {
		width: 33px;
		height: 2px;
		margin-left: 21px;
		background: #2f62b0;
	}

	/* taskbar */
	.taskbar {
		flex: 1;
		position: relative;
		display: flex;
		align-items: center;
		padding-top: 4px;
		box-sizing: border-box;
		background: linear-gradient(95deg, #dcdde0 0%, #dadbe2 15%, #dddfd8 40%, #e2e3e5 70%, #dcdde2 100%);
		border-bottom: 3px solid #c9e5c0;
	}

	.start {
		width: 35px;
		height: 35px;
		margin-left: 303px;
	}

	.search {
		box-sizing: border-box;
		width: 328px;
		height: 46px;
		margin-left: 21px;
		padding-left: 15px;
		display: flex;
		align-items: center;
		gap: 16px;
		border-radius: 23px;
		background: linear-gradient(100deg, #f5f5f3, #f2f3fa 60%, #f4f4e8);
		box-shadow: 0 1px 2px rgba(0, 0, 0, 0.3);
		font-size: 20px;
		font-weight: 300;
		color: #555;
	}

	.sr {
		stroke: #222;
		stroke-width: 2.500;
	}

	.apps {
		display: flex;
		margin-left: 2px;
	}

	.app {
		position: relative;
		width: 66.300px;
		height: 56px;
		display: flex;
		align-items: center;
		justify-content: center;
		flex: none;
	}

	.ai {
		width: 36px;
		height: 36px;
	}

	.app.dotted::after {
		content: '';
		position: absolute;
		left: 50%;
		bottom: 0;
		width: 9px;
		height: 5px;
		margin-left: -4px;
		border-radius: 3px;
		background: #666;
	}

	.app.wps {
		background: #f1f0ed;
		border-radius: 5px;
		box-shadow: 0 1px 1px rgba(0, 0, 0, 0.2);
		width: 57px;
		margin: 0 5px;
	}

	.app.wps::after {
		content: '';
		position: absolute;
		left: 17px;
		bottom: 0;
		width: 25px;
		height: 4px;
		border-radius: 3px;
		background: #0a6fd8;
	}

	.aa {
		font: 10px 'Liberation Sans', sans-serif;
		fill: #fff;
	}

	.tray {
		display: flex;
		align-items: center;
		margin-left: 59px;
	}

	.t-up {
		width: 20px;
		height: 14px;
		stroke: #222;
	}

	.t-sync {
		width: 26px;
		height: 30px;
		margin-left: 14px;
		stroke: #333;
	}

	.t-mic {
		width: 20px;
		height: 30px;
		margin-left: 19px;
		stroke: #2c5fb0;
	}

	.t-ime {
		width: 24px;
		height: 30px;
		margin-left: 26px;
		stroke: #666;
	}

	.t-s {
		width: 25px;
		height: 25px;
		margin-left: 32px;
	}

	.s-txt {
		font: italic 700 20px 'Liberation Sans', sans-serif;
		fill: #fff;
	}

	.cursor {
		position: absolute;
		left: 1409px;
		top: 583px;
		width: 24px;
		height: 24px;
	}
</style>
